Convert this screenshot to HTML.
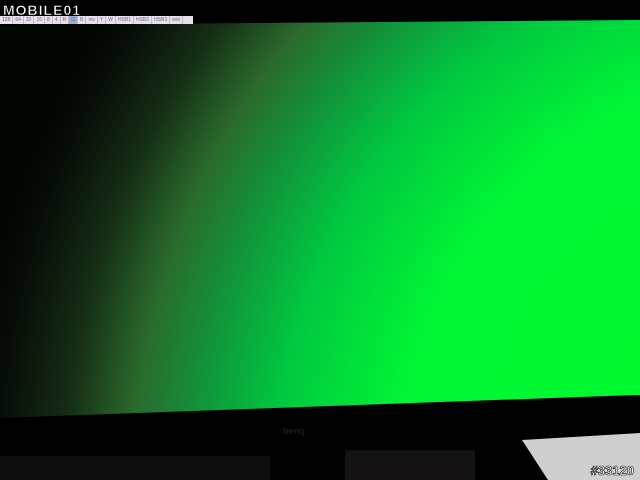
<!DOCTYPE html>
<html><head><style>
html,body{margin:0;padding:0;background:#000;width:640px;height:480px;overflow:hidden;position:relative}
.logo{position:absolute;left:3px;top:2px;color:#fff;font:bold 14px "Liberation Sans",sans-serif;letter-spacing:1px;-webkit-text-stroke:0.5px #000}
.tb{position:absolute;left:0;top:16px;height:8px;width:193px;background:#e8e0ee;display:flex;font:5px "Liberation Sans",sans-serif;color:#667}
.tb span{border-right:1px solid #bbb;padding:0 2px;line-height:8px}
.wm{position:absolute;right:6px;bottom:2px;color:#fff;font:bold 13px "Liberation Sans",sans-serif;-webkit-text-stroke:0.6px #000}
</style></head><body>
<svg width="640" height="480" style="position:absolute;left:0;top:0">
<defs>
<radialGradient id="g" gradientUnits="userSpaceOnUse" cx="820" cy="480" r="850">
<stop offset="0" stop-color="#00ff28"/>
<stop offset="0.5" stop-color="#00f535"/>
<stop offset="0.64" stop-color="#00c840"/>
<stop offset="0.73" stop-color="#10963a"/>
<stop offset="0.81" stop-color="#2a6a2c"/>
<stop offset="0.89" stop-color="#142c14"/>
<stop offset="0.97" stop-color="#060c06"/>
<stop offset="1" stop-color="#040604"/>
</radialGradient>
</defs>
<rect width="640" height="480" fill="#000"/>
<polygon points="0,25 640,20 640,395 634,395 0,418" fill="url(#g)"/>
<polygon points="522,440 640,433 640,480 548,480" fill="#cfcfcf"/>
<rect x="0" y="456" width="270" height="24" fill="#0e0e0e"/>
<rect x="345" y="450" width="130" height="30" fill="#141212"/>
<text x="283" y="434" font-family="Liberation Sans" font-size="9" font-weight="bold" fill="#1c1c1c">benq</text>
</svg>
<div class="logo">MOBILE01</div>
<div class="tb"><span>128</span><span>64</span><span>32</span><span>16</span><span>8</span><span>4</span><span>R</span><span style="background:#9ac">G</span><span>B</span><span>inv</span><span>Y</span><span>W</span><span>HSB1</span><span>HSB2</span><span>HSB3</span><span>exit</span></div>
<div class="wm">#33120</div>
</body></html>
